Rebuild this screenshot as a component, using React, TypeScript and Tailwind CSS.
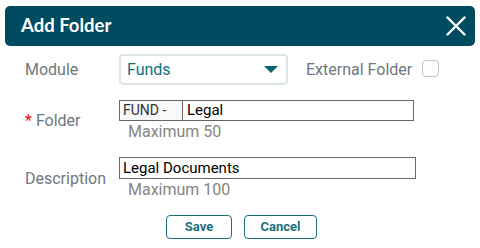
import React from "react";

export default function App() {
  const roboto = { fontFamily: "Roboto, 'Liberation Sans', sans-serif" };
  return (
    <div className="w-[480px] h-[248px] bg-white relative" style={roboto}>
      <div className="pt-[6px] px-[5px]">
        <div className="h-[40px] rounded-[5px] bg-[#004b5f] flex items-center justify-between pl-[16px] pr-[8px]">
          <span
            className="text-white text-[18.5px] font-bold"
            style={{ fontFamily: "Lato, 'Liberation Sans', sans-serif" }}
          >
            Add Folder
          </span>
          <svg width="20" height="20" viewBox="0 0 20 20" className="mr-[1px]">
            <path d="M1.5 1.5 L18.5 18.5 M18.5 1.5 L1.5 18.5" stroke="white" strokeWidth="2.4" strokeLinecap="round" />
          </svg>
        </div>
      </div>

      {/* Module row */}
      <div className="mt-[8px] flex items-center pl-[25px] h-[31px]">
        <div className="w-[94px] text-[16px] text-[#6f7780]">Module</div>
        <div className="w-[169px] h-[31px] border-2 border-[#dbe4e6] rounded-[4px] flex items-center justify-between pl-[6px] pr-[8px]">
          <span className="text-[16px] text-[#0d6f7c]">Funds</span>
          <svg width="14" height="8" viewBox="0 0 14 8">
            <path d="M0 0 H14 L7 7 Z" fill="#0b6570" />
          </svg>
        </div>
        <div className="ml-[18px] text-[16px] text-[#6f7780]">External Folder</div>
        <div className="ml-[10px] w-[17px] h-[17px] border border-[#b8c8cd] rounded-[4px] mt-[-3px]" />
      </div>

      {/* Folder row */}
      <div className="mt-[15px] flex items-center pl-[25px]">
        <div className="w-[94px] text-[16px] text-[#6f7780] pt-[1px]">
          <span className="text-[#e3141b] mr-[4px]">*</span>Folder
        </div>
        <div>
          <div className="w-[295px] h-[21px] border border-[#666] flex items-center">
            <div className="h-full w-[63px] bg-[#f8f8f8] border-r border-[#666] pl-[3px] flex items-center text-[14px] text-[#333]">
              FUND -
            </div>
            <span className="pl-[4px] text-[15px] text-black">Legal</span>
          </div>
          <div className="pl-[9px] text-[16px] leading-[19px] mt-[1px] text-[#858585]">Maximum 50</div>
        </div>
      </div>

      {/* Description row */}
      <div className="mt-[16px] flex items-center pl-[25px]">
        <div className="w-[94px] text-[16px] text-[#6f7780] pt-[1px]">Description</div>
        <div>
          <div className="w-[297px] h-[22px] border border-[#666] flex items-center pl-[3px] text-[15px] text-black">
            Legal Documents
          </div>
          <div className="pl-[9px] text-[16px] leading-[19px] mt-[1px] text-[#858585]">Maximum 100</div>
        </div>
      </div>

      {/* Buttons */}
      <div className="mt-[16px] flex justify-center gap-[12px] pl-[3px]">
        <button className="w-[66px] h-[24px] border border-[#1b6f7b] rounded-[4px] text-[13px] font-bold text-[#1b6f7b] bg-white">
          Save
        </button>
        <button className="w-[73px] h-[24px] border border-[#1b6f7b] rounded-[4px] text-[13px] font-bold text-[#1b6f7b] bg-white">
          Cancel
        </button>
      </div>
    </div>
  );
}
